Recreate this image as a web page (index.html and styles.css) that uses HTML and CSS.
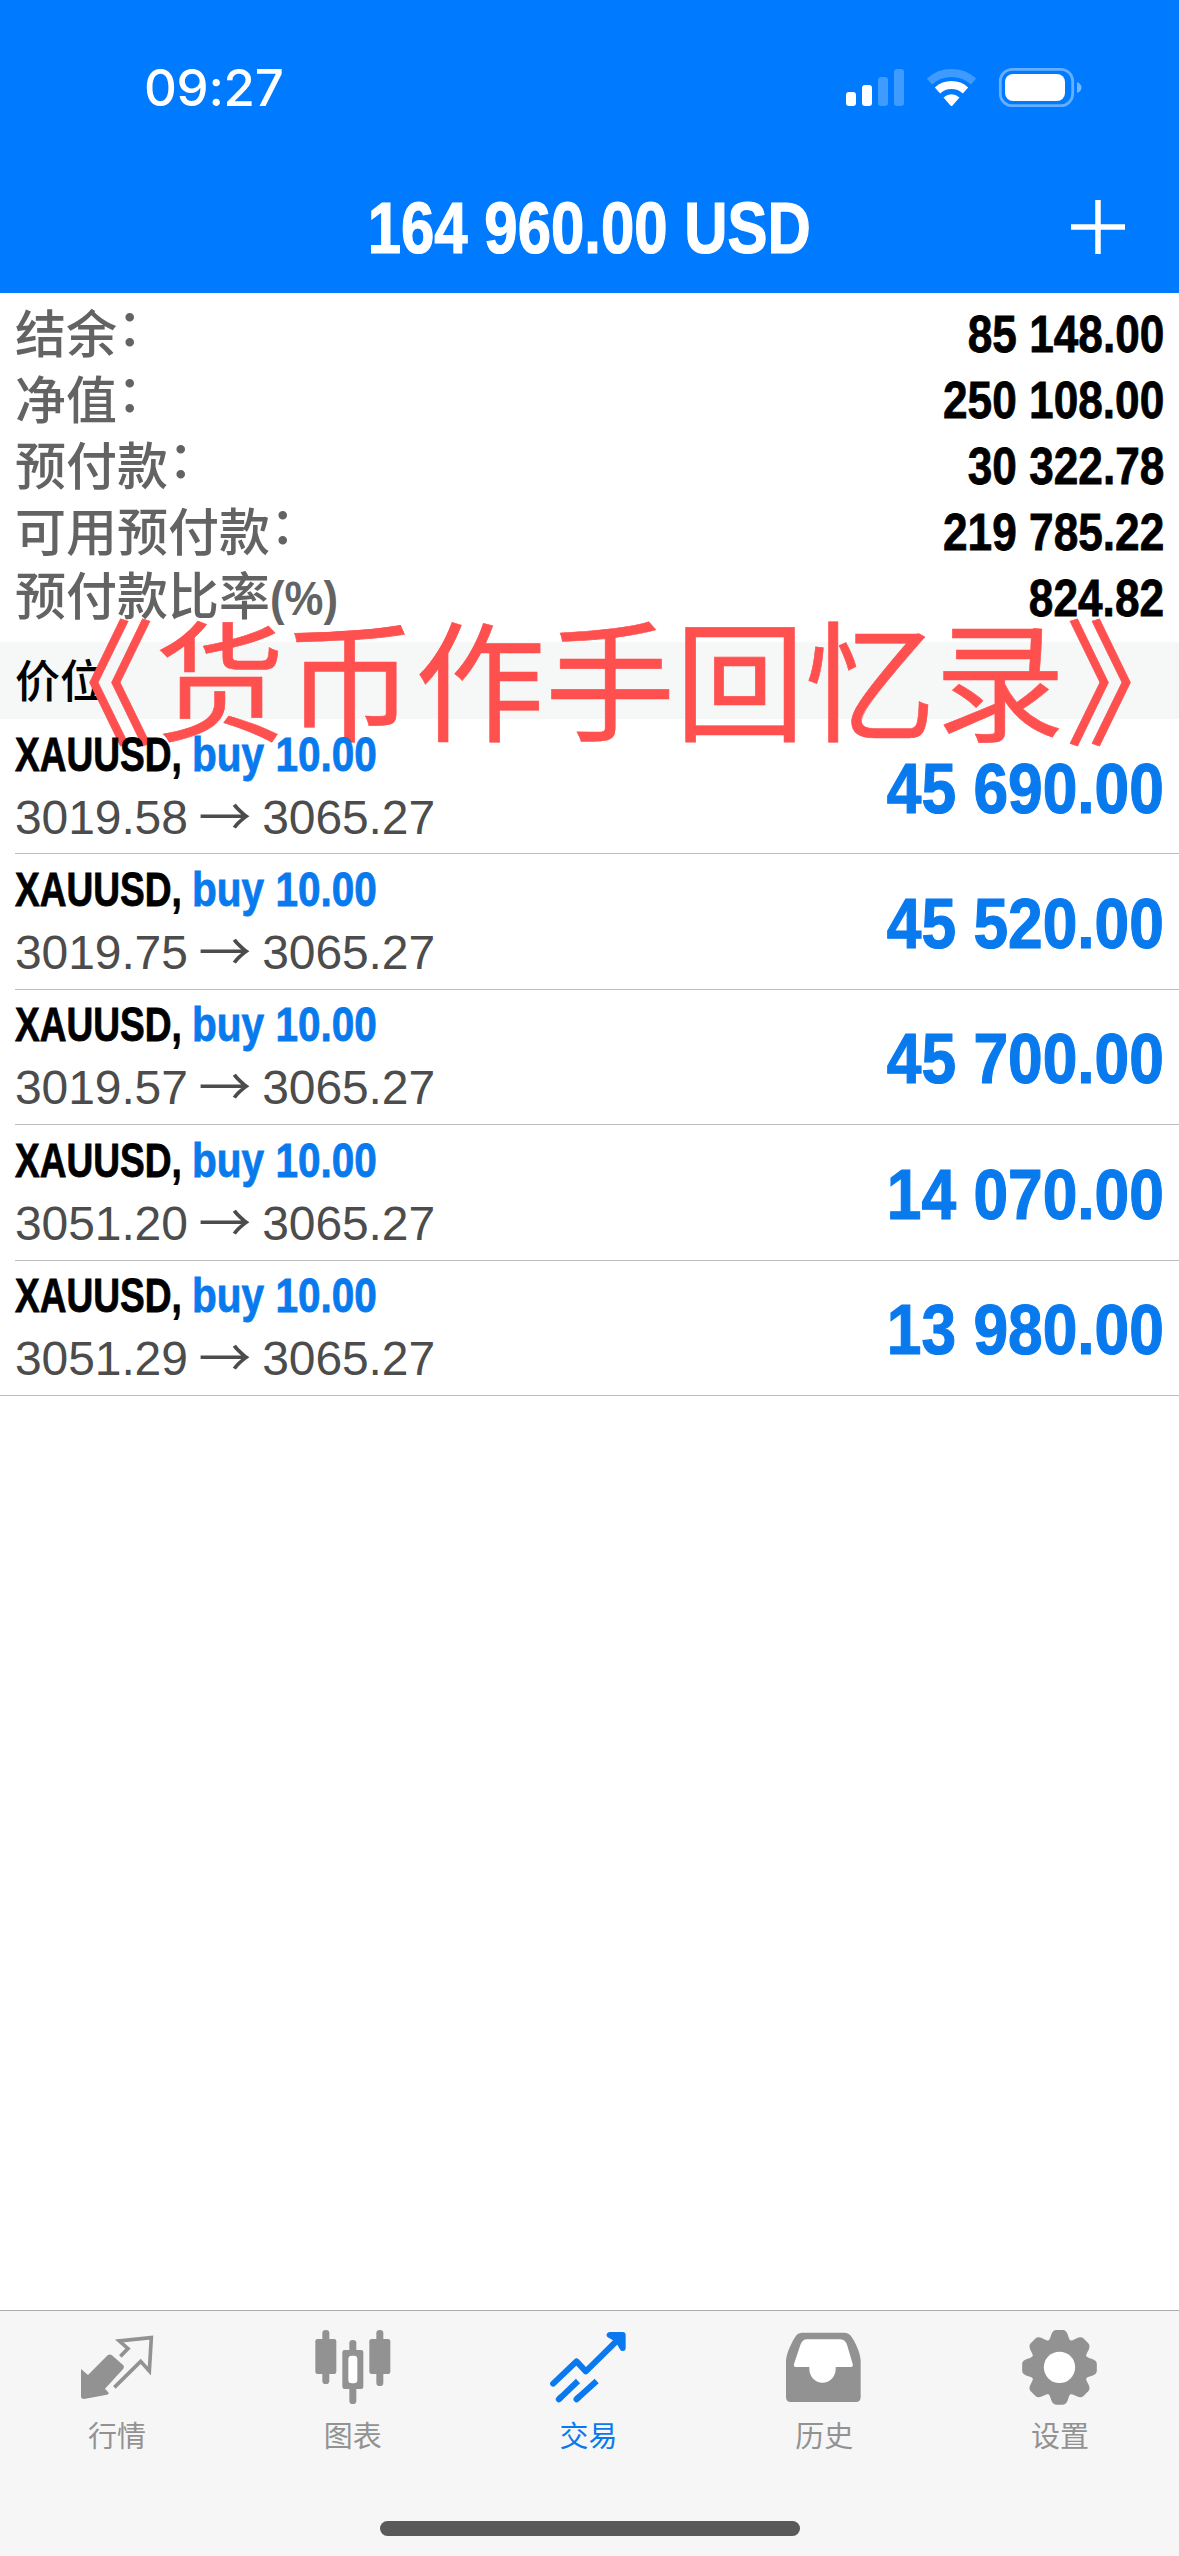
FILE: index.html
```html
<!DOCTYPE html>
<html lang="zh-CN">
<head>
<meta charset="utf-8">
<title>交易</title>
<link rel="stylesheet" href="styles.css">
</head>
<body>
<div class="screen">
  <header class="header">
    <div class="status">
      <span class="time">09:27</span>
      <svg class="status-icons" viewBox="0 0 244 44" fill="#fff">
        <rect x="6" y="26" width="10" height="14" rx="3"/>
        <rect x="22" y="19" width="10" height="21" rx="3"/>
        <rect x="38" y="11" width="10" height="29" rx="3" opacity=".25"/>
        <rect x="54" y="3" width="10" height="37" rx="3" opacity=".25"/>
        <path d="M89.500 15.500A33 33 0 0 1 133.500 15.500" fill="none" stroke="#fff" stroke-width="8" opacity=".25"/>
        <path d="M97.500 24.400A21 21 0 0 1 125.500 24.400" fill="none" stroke="#fff" stroke-width="8"/>
        <path d="M103.500 31.500Q111.500 25 119.500 31.500L112.500 39.500Q111.500 40.500 110.500 39.500Z"/>
        <rect x="160.300" y="3.300" width="72.400" height="36.400" rx="12" fill="none" stroke="#fff" stroke-width="2.800" opacity=".4"/>
        <rect x="165" y="8" width="60" height="27" rx="8"/>
        <path d="M237 16Q241.500 18 241.500 21.500T237 27Z" opacity=".45"/>
      </svg>
    </div>
    <div class="nav">
      <h1 class="title">164 960.00 USD</h1>
      <svg class="plus" viewBox="0 0 54 54"><path d="M27 0V54M0 27H54" stroke="#fff" stroke-width="5.500"/></svg>
    </div>
  </header>

  <main class="content">
    <dl class="account">
      <div class="account-row"><dt>结余<span class="colon">：</span></dt><dd>85 148.00</dd></div>
      <div class="account-row"><dt>净值<span class="colon">：</span></dt><dd>250 108.00</dd></div>
      <div class="account-row"><dt>预付款<span class="colon">：</span></dt><dd>30 322.78</dd></div>
      <div class="account-row"><dt>可用预付款<span class="colon">：</span></dt><dd>219 785.22</dd></div>
      <div class="account-row"><dt>预付款比率<span class="percent">(%)</span></dt><dd>824.82</dd></div>
    </dl>
    <div class="section">价位<div class="watermark"><span class="quote-open">《</span>货币作手回忆录<span class="quote-close">》</span></div></div>
    <ul class="positions">
      <li class="position"><div><div class="deal"><span class="symbol">XAUUSD,</span><span class="side">buy 10.00</span></div><div class="prices">3019.58 <span class="arrow">→</span> 3065.27</div></div><div class="profit">45 690.00</div></li>
      <li class="position"><div><div class="deal"><span class="symbol">XAUUSD,</span><span class="side">buy 10.00</span></div><div class="prices">3019.75 <span class="arrow">→</span> 3065.27</div></div><div class="profit">45 520.00</div></li>
      <li class="position"><div><div class="deal"><span class="symbol">XAUUSD,</span><span class="side">buy 10.00</span></div><div class="prices">3019.57 <span class="arrow">→</span> 3065.27</div></div><div class="profit">45 700.00</div></li>
      <li class="position"><div><div class="deal"><span class="symbol">XAUUSD,</span><span class="side">buy 10.00</span></div><div class="prices">3051.20 <span class="arrow">→</span> 3065.27</div></div><div class="profit">14 070.00</div></li>
      <li class="position"><div><div class="deal"><span class="symbol">XAUUSD,</span><span class="side">buy 10.00</span></div><div class="prices">3051.29 <span class="arrow">→</span> 3065.27</div></div><div class="profit">13 980.00</div></li>
    </ul>
  </main>

  <footer class="footer">
    <nav class="tabs">
      <a class="tab">
        <svg class="tab-icon" viewBox="0 0 240 240" fill="currentColor">
          <path d="M9 132L30 150L89 91Q95 86 101 90L136 121Q140 125 136 131L81 191L92 203Q93 208 87 209L18 222Q9 222 9 214Z"/>
          <path d="M127 94L150 71L124 48L220 38L214 138L188 109L109 187" fill="none" stroke="currentColor" stroke-width="11"/>
        </svg>
        <span>行情</span>
      </a>
      <a class="tab">
        <svg class="tab-icon" viewBox="0 0 240 240" fill="currentColor">
          <rect x="25" y="15" width="21" height="162" rx="10"/><rect x="4" y="42" width="63" height="105" rx="7"/>
          <rect x="106" y="45" width="21" height="192" rx="10"/><rect x="85" y="75" width="63" height="117" rx="7"/>
          <rect x="103" y="92" width="27" height="83" rx="10" fill="#fff"/>
          <rect x="187" y="15" width="21" height="168" rx="10"/><rect x="166" y="42" width="63" height="105" rx="7"/>
        </svg>
        <span>图表</span>
      </a>
      <a class="tab active">
        <svg class="tab-icon" viewBox="0 0 240 240" fill="none" stroke="currentColor" stroke-width="18" stroke-linecap="round" stroke-linejoin="round">
          <path d="M12.500 176L82.500 109L110.500 139L215 36M182 30H221V69L207 44Z"/>
          <path d="M29.500 223L87 168M82.500 223L143 168" stroke-linecap="butt"/>
          <path d="M29.500 223L34 218M82.500 223L87 218"/>
        </svg>
        <span>交易</span>
      </a>
      <a class="tab">
        <svg class="tab-icon" viewBox="0 0 240 240" fill="currentColor">
          <path d="M3 220V110C3 85 22 48 34 31Q40 23 50 23H180Q190 23 196 31C210 48 227 85 227 110V217Q227 231 213 231H17Q3 231 3 217Z"/>
          <path d="M32 126H73V132A39.500 41 0 0 0 152 132V126H198Q205 126 203 117L187 62Q181 43 166 43H66Q52 43 46 60L27 117Q25 126 32 126Z" fill="#fff"/>
        </svg>
        <span>历史</span>
      </a>
      <a class="tab">
        <svg class="tab-icon" viewBox="0 0 240 240" fill="currentColor">
          <defs><path id="tooth" d="M-36 -76Q-29 -82 -25 -98Q-20 -112 -10 -112H10Q20 -112 25 -98Q29 -82 36 -76Z"/></defs>
          <g transform="translate(115.500 127)">
            <circle r="87"/>
            <use href="#tooth"/><use href="#tooth" transform="rotate(45)"/><use href="#tooth" transform="rotate(90)"/><use href="#tooth" transform="rotate(135)"/>
            <use href="#tooth" transform="rotate(180)"/><use href="#tooth" transform="rotate(225)"/><use href="#tooth" transform="rotate(270)"/><use href="#tooth" transform="rotate(315)"/>
            <circle r="47" fill="#fff"/>
          </g>
        </svg>
        <span>设置</span>
      </a>
    </nav>
    <div class="home-bar"></div>
  </footer>
</div>
</body>
</html>
```
FILE: styles.css
```css
* { box-sizing: border-box; margin: 0; padding: 0; }
body { background: #fff; font-family: "Liberation Sans", "Noto Sans CJK SC", sans-serif; }
.screen { width: 1179px; height: 2556px; display: flex; flex-direction: column; overflow: hidden; }

.header { height: 293px; background: #007aff; color: #fff; display: flex; flex-direction: column; }
.status { height: 160px; padding: 16px 95px 0 144px; display: flex; align-items: center; justify-content: space-between; }
.time { font: 500 51px/60px Inter, sans-serif; letter-spacing: -.3px; }
.status-icons { width: 244px; height: 44px; }
.nav { height: 133px; padding: 0 54px; display: grid; grid-template-columns: 1fr auto 1fr; align-items: center; }
.title { grid-column: 2; font-size: 72px; line-height: 132px; white-space: nowrap; -webkit-text-stroke: 1.2px currentColor; transform: translateY(1px) scaleX(.832); }
.plus { width: 54px; height: 54px; justify-self: end; }

.content { flex: 1; }
.account { padding: 8px 15px 11px; }
.account-row { height: 66px; display: flex; justify-content: space-between; align-items: center; }
.account dt { padding-bottom: 5px; font: 500 51px/61px "Noto Sans CJK SC", sans-serif; color: #636363; white-space: nowrap; }
.colon { display: inline-block; transform: translateY(-7px); }
.percent { display: inline-block; font: 700 48px/60px "Liberation Sans", sans-serif; transform: scaleX(.91); transform-origin: left; }
.account dd { font-weight: 700; font-size: 52px; line-height: 66px; color: #000; -webkit-text-stroke: .8px currentColor; transform: scaleX(.85); transform-origin: right; white-space: nowrap; }

.section { position: relative; height: 77px; padding-left: 15px; background: #f6f7f7; font: 500 45px/73px "Noto Sans CJK SC", sans-serif; color: #000; }
.watermark { position: absolute; left: 25px; top: -58px; font-size: 130px; font-weight: 400; line-height: 180px; color: #ff5050; -webkit-text-stroke: .6px currentColor; white-space: nowrap; }
.quote-open, .quote-close { display: inline-block; transform: scale(1.07, 1.05); transform-origin: right; }
.quote-close { width: 130px; transform-origin: left; }

.positions { list-style: none; }
.position { height: 135.400px; margin-left: 15px; padding-right: 15px; border-bottom: 1px solid #b9bdbd; display: flex; justify-content: space-between; align-items: center; }
.position:last-child { margin-left: 0; padding-left: 15px; }
.deal { display: flex; height: 63px; font-size: 48px; line-height: 63px; font-weight: 700; white-space: nowrap; -webkit-text-stroke: .8px currentColor; }
.symbol { width: 177px; color: #000; transform: scaleX(.772); transform-origin: left; }
.side { width: 190px; color: #087aee; transform: scaleX(.845); transform-origin: left; }
.prices { height: 64px; font-size: 48px; line-height: 64px; letter-spacing: -.1px; color: #4c4c4c; white-space: nowrap; }
.arrow { display: inline-block; font-family: "Noto Sans CJK SC", sans-serif; line-height: 1; transform: scale(1.1); }
.profit { padding-top: 5px; font-size: 71px; line-height: 80px; font-weight: 700; color: #087aee; -webkit-text-stroke: 1.2px currentColor; transform: scaleX(.877); transform-origin: right; white-space: nowrap; }

.footer { height: 246px; background: #f6f6f6; border-top: 1px solid #abadac; display: flex; flex-direction: column; align-items: center; }
.tabs { width: 100%; height: 210px; display: grid; grid-template-columns: repeat(5, 1fr); }
.tab { padding-top: 14px; display: flex; flex-direction: column; align-items: center; color: #929292; font: 400 29px/58px "Noto Sans CJK SC", sans-serif; }
.tab span { padding-right: 2px; }
.tab.active { color: #0a78ee; }
.tab-icon { width: 80px; height: 80px; }
.home-bar { width: 420px; height: 15px; border-radius: 8px; background: #595959; }
```
